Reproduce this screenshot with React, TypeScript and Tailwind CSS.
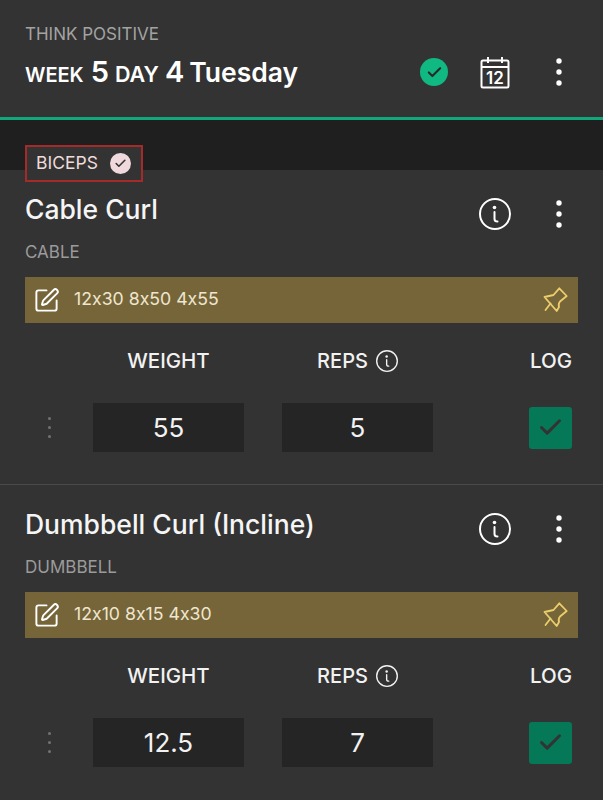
import { Check, SquarePen } from "lucide-react";

const font = { fontFamily: "Inter, sans-serif" };

const CalendarIcon = () => (
  <svg width="30" height="33" viewBox="0 0 30 33" fill="none" stroke="white" strokeWidth="2">
    <rect x="1.500" y="4.500" width="27" height="27" rx="1.500" />
    <path d="M1.500 11h27M8 1v6M22 1v6" />
    <text x="15" y="27.800" textAnchor="middle" fontSize="17" fontWeight="600" fill="white" stroke="none">
      12
    </text>
  </svg>
);

const InfoIcon = ({ size, stroke }: { size: number; stroke: number }) => (
  <svg width={size} height={size} viewBox="0 0 32 32" fill="none" stroke="currentColor" strokeWidth={stroke}>
    <circle cx="16" cy="16" r={16 - stroke / 2} />
    <circle cx="15.500" cy="9.500" r="1.800" fill="currentColor" stroke="none" />
    <path d="M15.500 14v7c0 2 1 2.500 3 2.500" strokeLinecap="round" />
  </svg>
);

const PinIcon = () => (
  <svg width="28" height="28" viewBox="0 0 28 28" fill="none" stroke="#ecce6d" strokeWidth="1.800" strokeLinejoin="round" strokeLinecap="round">
    <path d="M16.300 2.300L23.700 10L17 15.500Q15 18 16 21L13.700 25L1.500 11L10.500 9Z" />
    <path d="M7.500 17.500L2.500 24" />
  </svg>
);

const Kebab = () => (
  <svg width="36" height="36" viewBox="0 0 36 36" fill="white">
    <circle cx="18" cy="7" r="2.700" />
    <circle cx="18" cy="18" r="2.700" />
    <circle cx="18" cy="29" r="2.700" />
  </svg>
);

type ExerciseProps = {
  name: string;
  kind: string;
  note: string;
  weight: string;
  reps: string;
  className: string;
};

const Exercise = ({ name, kind, note, weight, reps, className }: ExerciseProps) => (
  <div className={className}>
    <div className="flex items-center justify-between h-[40px] pl-[25px] pr-[26px]">
      <h2 className="mb-[10px] text-[26.500px] leading-[30px] font-medium text-[#f5f5f5]">{name}</h2>
      <div className="flex items-center gap-[30px] text-white">
        <InfoIcon size={32} stroke={2} />
        <Kebab />
      </div>
    </div>
    <div className="px-[25px] mt-[6px] text-[17px] leading-[24px] text-[#9b9b9b]">{kind}</div>
    <div className="mx-[25px] mt-[13px] h-[46px] bg-[#756539] flex items-center pl-[8px] pr-[7px]">
      <SquarePen size={27} strokeWidth={1.7} className="text-white" />
      <span className="ml-[14px] mb-[2px] text-[17.700px] text-[#efe6cf] flex-1 [font-feature-settings:'calt'_0]">{note}</span>
      <PinIcon />
    </div>
    <div className="grid grid-cols-[93px_151px_38px_151px_1fr] items-center mt-[23px] h-[26px] text-[20.500px] font-medium text-[#f2f2f2]">
      <div className="col-start-2 text-center">WEIGHT</div>
      <div className="col-start-4 flex items-center justify-center gap-[8px] text-[20px]">
        REPS
        <InfoIcon size={22} stroke={2} />
      </div>
      <div className="col-start-5 text-right pr-[31px]">LOG</div>
    </div>
    <div className="grid grid-cols-[93px_151px_38px_151px_1fr] items-center mt-[31px] h-[49px]">
      <div className="flex flex-col items-center gap-[6px] pl-[5px]">
        <span className="w-[3px] h-[3px] rounded-full bg-[#737373]" />
        <span className="w-[3px] h-[3px] rounded-full bg-[#737373]" />
        <span className="w-[3px] h-[3px] rounded-full bg-[#737373]" />
      </div>
      <div className="h-[49px] bg-[#252525] flex items-center justify-center text-[26px] text-[#f2f2f2]">{weight}</div>
      <div className="col-start-4 h-[49px] bg-[#252525] flex items-center justify-center text-[26px] text-[#f2f2f2]">{reps}</div>
      <div className="flex justify-end pr-[31px]">
        <div className="w-[43px] h-[42px] rounded-[3px] bg-[#047857] flex items-center justify-center">
          <Check size={27} strokeWidth={2.600} className="text-[#333333]" />
        </div>
      </div>
    </div>
  </div>
);

const App = () => {
  return (
    <div className="w-[603px] h-[800px] overflow-hidden bg-[#333333]" style={font}>
      <header className="h-[120px] border-b-[3px] border-[#10a77a] pl-[25px] pr-[26px] pt-[23px]">
        <div className="text-[17px] leading-[22px] text-[#a3a3a3]">THINK POSITIVE</div>
        <div className="flex items-center justify-between mt-[9px] h-[36px]">
          <div className="flex items-baseline font-semibold text-white">
            <span className="text-[20px]">WEEK</span>
            <span className="ml-[7px] text-[29px]">5</span>
            <span className="ml-[6px] text-[21.500px]">DAY</span>
            <span className="ml-[6px] text-[29px]">4</span>
            <span className="ml-[5px] text-[26.500px]">Tuesday</span>
          </div>
          <div className="flex items-center">
            <div className="w-[28px] h-[28px] rounded-full bg-[#10b981] flex items-center justify-center">
              <Check size={17} strokeWidth={3} className="text-[#2a2a2a]" />
            </div>
            <div className="ml-[32px] mr-[31px] flex">
              <CalendarIcon />
            </div>
            <Kebab />
          </div>
        </div>
      </header>
      <div className="h-[50px] bg-[#1f1f1f]" />
      <div className="relative -mt-[25px] ml-[25px] w-[118px] h-[37px] border-2 border-[#a52a2a] bg-[#333333] flex items-center pl-[9px] gap-[12px]">
        <span className="text-[17.500px] text-[#f0dcdc]">BICEPS</span>
        <span className="w-[21px] h-[21px] rounded-full bg-[#f0d9dc] flex items-center justify-center">
          <Check size={13} strokeWidth={3} className="text-[#333333]" />
        </span>
      </div>
      <Exercise
        name="Cable Curl"
        kind="CABLE"
        note="12x30 8x50 4x55"
        weight="55"
        reps="5"
        className="pt-[12px] pb-[32px] border-b border-[#4a4a4a]"
      />
      <Exercise
        name="Dumbbell Curl (Incline)"
        kind="DUMBBELL"
        note="12x10 8x15 4x30"
        weight="12.5"
        reps="7"
        className="pt-[24px]"
      />
    </div>
  );
};

export default App;
